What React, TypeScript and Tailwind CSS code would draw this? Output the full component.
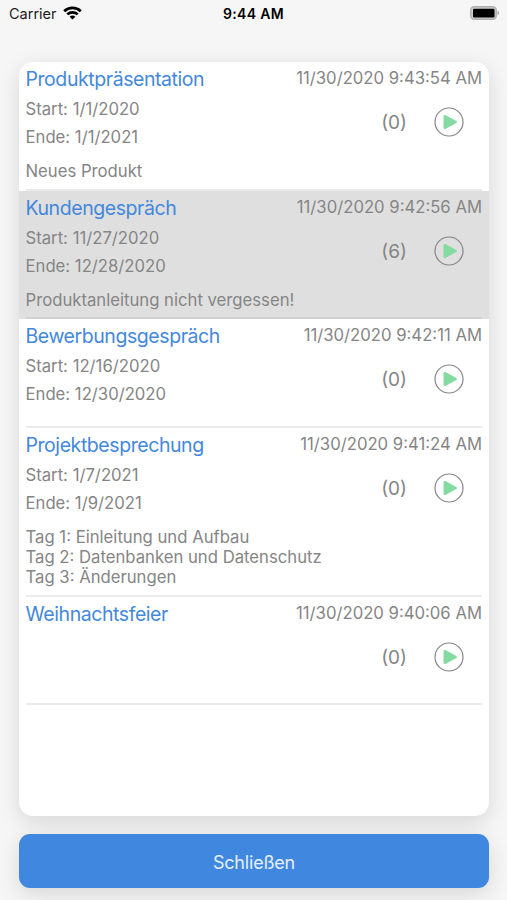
type Entry = {
  title: string;
  created: string;
  start?: string;
  end?: string;
  notes?: string[];
  count: number;
  selected?: boolean;
};

const entries: Entry[] = [
  {
    title: "Produktpräsentation",
    created: "11/30/2020 9:43:54 AM",
    start: "1/1/2020",
    end: "1/1/2021",
    notes: ["Neues Produkt"],
    count: 0,
  },
  {
    title: "Kundengespräch",
    created: "11/30/2020 9:42:56 AM",
    start: "11/27/2020",
    end: "12/28/2020",
    notes: ["Produktanleitung nicht vergessen!"],
    count: 6,
    selected: true,
  },
  {
    title: "Bewerbungsgespräch",
    created: "11/30/2020 9:42:11 AM",
    start: "12/16/2020",
    end: "12/30/2020",
    count: 0,
  },
  {
    title: "Projektbesprechung",
    created: "11/30/2020 9:41:24 AM",
    start: "1/7/2021",
    end: "1/9/2021",
    notes: ["Tag 1: Einleitung und Aufbau", "Tag 2: Datenbanken und Datenschutz", "Tag 3: Änderungen"],
    count: 0,
  },
  {
    title: "Weihnachtsfeier",
    created: "11/30/2020 9:40:06 AM",
    count: 0,
  },
];

function StatusBar() {
  return (
    <header className="grid h-[26px] grid-cols-3 items-center pl-[9px] pr-[7px] text-[14px] text-[#1c1c1c]">
      <div className="flex items-center gap-1.5">
        <span className="pt-0.5 text-[14.5px]">Carrier</span>
        <svg width="19" height="14" viewBox="0 0 19 14" fill="none" stroke="#000" strokeWidth="2.7">
          <path d="M1.2 5.3C5.8.8 13.2.8 17.8 5.3" />
          <path d="M4.3 8.4c2.9-2.8 7.5-2.8 10.4 0" />
          <path d="M6.6 10.7c1.6-1.5 4.2-1.5 5.8 0L9.5 13.6z" fill="#000" stroke="none" />
        </svg>
      </div>
      <div className="pt-px pr-0.5 text-center text-[14px] font-semibold tracking-[0.3px] text-black">9:44 AM</div>
      <svg className="justify-self-end" width="30" height="14" viewBox="0 0 30 14">
        <rect x="0.8" y="0.8" width="25.4" height="12.4" rx="3.5" fill="#d0d0d0" stroke="#b0b0b0" strokeWidth="1.5" />
        <rect x="3" y="2.8" width="21.5" height="8.6" rx="1.2" fill="#000" />
        <path d="M27.5 4.8c2 .5 2 3.9 0 4.4z" fill="#a6a6a6" />
      </svg>
    </header>
  );
}

function PlayButton() {
  return (
    <button type="button" aria-label="Start">
      <svg width="30" height="30" viewBox="0 0 30 30">
        <circle cx="15" cy="15" r="14" fill="none" stroke="#858585" strokeWidth="1.2" />
        <path
          d="M10.8 9.2v11.6L21.7 15z"
          className="fill-[#84dba2] stroke-[#84dba2]"
          strokeWidth="2.5"
          strokeLinejoin="round"
        />
      </svg>
    </button>
  );
}

function EntryRow({ entry }: { entry: Entry }) {
  return (
    <li className={entry.selected ? "bg-[#dfdfdf] pr-[7px] pl-[6.5px]" : "pr-[7px] pl-[6.5px]"}>
      <div className="flex items-start justify-between pt-[3px]">
        <div>
          <h2 className="text-[19.5px] leading-7 tracking-[-0.43px] text-[#4388dc]">{entry.title}</h2>
          <div className="mt-0.5 h-14 text-[16.7px] leading-7">
            {entry.start && <p>Start: {entry.start}</p>}
            {entry.end && <p>Ende: {entry.end}</p>}
          </div>
        </div>
        <div className="flex flex-col items-end">
          <time className="text-[16.7px] leading-[26px]">{entry.created}</time>
          <div className="mt-[15px] flex items-center gap-[27px] pr-[18px]">
            <span className="pt-0.5 text-[19px] leading-[30px]">({entry.count})</span>
            <PlayButton />
          </div>
        </div>
      </div>
      <div className="mt-2.5 pb-[7.25px] text-[16.7px] leading-[20.4px]">
        {entry.notes?.map((line) => (
          <p key={line}>{line}</p>
        ))}
      </div>
      <div className={entry.selected ? "h-0.5 bg-[#d1d1d1]" : "h-0.5 bg-[#ebebeb]"} />
    </li>
  );
}

export default function App() {
  return (
    <div className="flex h-[900px] w-full flex-col overflow-hidden bg-[#f6f6f6] font-['Inter','Liberation_Sans',sans-serif] text-[#858585]">
      <StatusBar />
      <main className="flex flex-1 flex-col pt-9 pr-[18px] pl-[19px]">
        <section className="h-[754px] overflow-hidden rounded-[14px] bg-white shadow-[0_6px_22px_rgba(0,0,0,0.13)]">
          <ul>
            {entries.map((entry) => (
              <EntryRow key={entry.title} entry={entry} />
            ))}
          </ul>
        </section>
        <button
          type="button"
          className="mt-[18px] h-[54px] rounded-[11px] bg-[#4088df] pt-0.5 text-[18px] tracking-[-0.2px] text-[#e4effc] shadow-[0_6px_22px_rgba(0,0,0,0.13)]"
        >
          Schließen
        </button>
      </main>
    </div>
  );
}
